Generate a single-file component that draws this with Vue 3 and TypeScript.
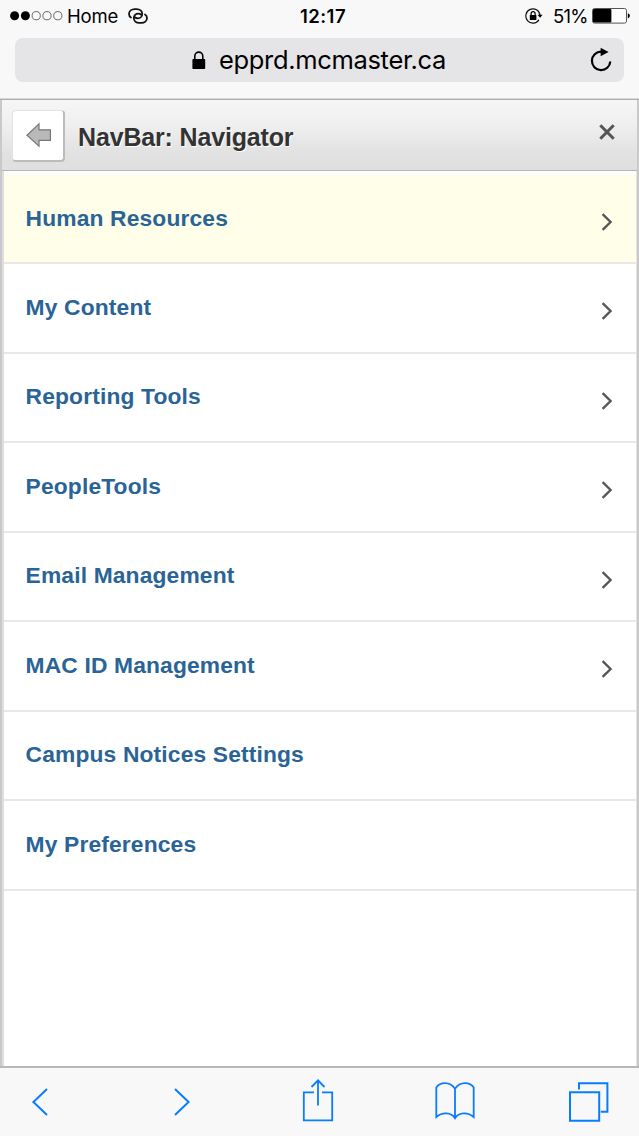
<script setup lang="ts">
interface NavItem {
  label: string
  folder: boolean
}

const signalDots: boolean[] = [true, true, false, false, false]

const items: NavItem[] = [
  { label: 'Human Resources', folder: true },
  { label: 'My Content', folder: true },
  { label: 'Reporting Tools', folder: true },
  { label: 'PeopleTools', folder: true },
  { label: 'Email Management', folder: true },
  { label: 'MAC ID Management', folder: true },
  { label: 'Campus Notices Settings', folder: false },
  { label: 'My Preferences', folder: false },
]
</script>

<template>
  <div class="phone">
    <div class="chrome">
      <div class="status">
        <div class="status-left">
          <svg class="dots" width="54" height="12" viewBox="0 0 54 12">
            <circle
              v-for="(on, i) in signalDots"
              :key="i"
              :cx="4.6 + i * 10.8"
              cy="5.7"
              :r="on ? 4.5 : 4.1"
              :fill="on ? '#000' : 'none'"
              :stroke="on ? 'none' : '#444'"
              stroke-width=".8"
            />
          </svg>
          <span class="carrier">Home</span>
          <svg class="link" width="20" height="16" viewBox="0 0 20 16" fill="none" stroke="#111" stroke-width="1.8" stroke-linecap="round">
            <path d="M3 9.5C1.6 8.7 1 7.5 1 6C1 3.2 3.4 1.1 6.8 1.1H8.6C12 1.1 14.2 3.2 14.2 5.9C14.2 8.6 12.2 10.3 9.8 10.3C8.6 10.3 7.6 10 6.8 9.3" />
            <path d="M17 6.5C18.4 7.3 19 8.5 19 10C19 12.8 16.6 14.9 13.2 14.9H11.4C8 14.9 5.8 12.8 5.8 10.1C5.8 7.4 7.8 5.7 10.2 5.7C11.4 5.7 12.4 6 13.2 6.7" />
          </svg>
        </div>
        <div class="clock">12:17</div>
        <div class="status-right">
          <svg class="rotation" width="18" height="16" viewBox="0 0 18 16">
            <path d="M13.9 11.8A7.1 7.1 0 1 1 15 7.2" fill="none" stroke="#111" stroke-width="1.2" />
            <path d="M12.5 6.8H17.6L15.1 9.7Z" />
            <rect x="4.8" y="6.9" width="6.6" height="5" rx=".5" />
            <path d="M6.1 7.4V5.7A2 2 0 0 1 10.1 5.7V7.4" fill="none" stroke="#000" stroke-width="1.2" />
          </svg>
          <span class="percent">51%</span>
          <svg class="battery" width="38" height="16" viewBox="0 0 38 16">
            <rect x=".5" y=".5" width="34" height="14.6" rx="2" fill="#fff" stroke="#555" />
            <rect x="1" y="1" width="18.4" height="13.6" rx="1" />
            <path d="M35.8 5.2Q37.9 6 37.9 7.8T35.8 10.4Z" />
          </svg>
        </div>
      </div>
      <div class="address">
        <svg class="lock" width="14" height="19" viewBox="0 0 14 19">
          <rect x=".4" y="8" width="12.8" height="10" rx=".8" />
          <path d="M2.8 8.6V5.2A4 4.1 0 0 1 10.8 5.2V8.6" fill="none" stroke="#000" stroke-width="1.6" />
        </svg>
        <span class="host">epprd.mcmaster.ca</span>
        <svg class="reload" width="22" height="24" viewBox="0 0 22 24">
          <path d="M11.2 3.7A9.2 9.2 0 1 0 20.3 13.5" fill="none" stroke="#000" stroke-width="2.2" />
          <path d="M10.6 -.2L18.6 4L10.6 8.2Z" />
        </svg>
      </div>
    </div>

    <main class="panel">
      <header class="header">
        <button class="back" aria-label="Back">
          <svg width="26" height="26" viewBox="0 0 26 26">
            <path d="M1 13.2L13 1.9V7.8H24.4V18.3H13V24.2Z" fill="#b9b9b9" stroke="#777" stroke-width="1.2" />
          </svg>
        </button>
        <h1>NavBar: Navigator</h1>
        <svg class="close" width="16" height="16" viewBox="0 0 16 16" fill="none" stroke="#555" stroke-width="3">
          <path d="M1.3 1.3L14.7 14.7M14.7 1.3L1.3 14.7" />
        </svg>
      </header>
      <ul class="list">
        <li v-for="(item, i) in items" :key="item.label" :class="{ active: i === 0 }">
          <span>{{ item.label }}</span>
          <svg v-if="item.folder" class="chevron" width="12" height="18" viewBox="0 0 12 18" fill="none" stroke="#555" stroke-width="2.3">
            <path d="M1.6 1.1L9.6 9L1.6 16.9" />
          </svg>
        </li>
      </ul>
    </main>

    <nav class="toolbar">
      <svg class="prev" width="18" height="30" viewBox="0 0 18 30"><path d="M16 2L2.4 15L16 28" /></svg>
      <svg class="next" width="18" height="30" viewBox="0 0 18 30"><path d="M2 2L15.6 15L2 28" /></svg>
      <svg class="share" width="32" height="43" viewBox="0 0 32 43">
        <path d="M12 13.3H1.8V41.4H30.2V13.3H20M16 1.4V26.4M9.5 8L16 1.4L22.5 8" />
      </svg>
      <svg class="book" width="40" height="38" viewBox="0 0 40 38">
        <path d="M20 36.2V6.8C17.2 2.4 13.2 1.2 9.8 1.2C6.3 1.2 3.2 2.7 1.3 5.4V35C7 30 16.2 30 20 36.2C23.8 30 33 30 38.7 35V5.4C36.8 2.7 33.7 1.2 30.2 1.2C26.8 1.2 22.8 2.4 20 6.8" />
      </svg>
      <svg class="tabs" width="40" height="40" viewBox="0 0 40 40">
        <path d="M1 10.2H30.2V38.8H1ZM10 7.6V1.2H38.4V29.7H31.8" />
      </svg>
    </nav>
  </div>
</template>

<style>
body {
  margin: 0;
  background: #fff;
}
</style>

<style scoped>
.phone {
  width: 639px;
  height: 1136px;
  display: flex;
  flex-direction: column;
  overflow: hidden;
  background: #fff;
  font-family: "Liberation Sans", Arial, sans-serif;
}
svg {
  display: block;
  flex: none;
}
.chrome {
  box-sizing: border-box;
  height: 100px;
  flex: none;
  background: #f8f8f8;
  border-bottom: 1px solid #b0b0b0;
  box-shadow: inset 0 -1px #d6d6d6;
  font-family: Inter, Roboto, sans-serif;
  color: #000;
}
.status {
  height: 38px;
  display: grid;
  grid-template-columns: 1fr 60px 1fr;
  padding-left: 7px;
  line-height: 33px;
  font-size: 18.5px;
}
.status-left,
.status-right {
  display: flex;
  align-items: flex-start;
}
.dots {
  margin: 10px 3px 0 3px;
}
.carrier {
  width: 51px;
  letter-spacing: -0.2px;
}
.link {
  margin: 8px 0 0 10px;
}
.clock {
  text-align: center;
  font-weight: 600;
  font-size: 18.5px;
  letter-spacing: 0.5px;
}
.status-right {
  justify-content: flex-end;
  padding-right: 9px;
}
.rotation {
  margin-top: 8px;
}
.percent {
  width: 35px;
  margin: 0 4px 0 10px;
  letter-spacing: -0.7px;
  white-space: nowrap;
}
.battery {
  margin-top: 8px;
}
.address {
  box-sizing: border-box;
  width: 609px;
  height: 44px;
  margin-left: 15px;
  padding: 0 12px 0 177px;
  display: flex;
  align-items: center;
  border-radius: 8px;
  background: #e5e5e7;
}
.host {
  margin-left: 13px;
  font-size: 25.5px;
  line-height: 44px;
  letter-spacing: -0.33px;
}
.reload {
  margin-left: auto;
  overflow: visible;
}
.panel {
  flex: 1;
  display: flex;
  flex-direction: column;
  min-height: 0;
  box-sizing: border-box;
  border-left: 2px solid #c9c9c9;
  border-right: 2px solid #c9c9c9;
}
.header {
  box-sizing: border-box;
  height: 71px;
  flex: none;
  display: flex;
  align-items: flex-start;
  padding: 10px 22px 0 10px;
  border-bottom: 1px solid #b5b5b5;
  background: linear-gradient(#f6f6f6, #efefef 35%, #e2e2e2 75%, #dfdfdf);
}
.back {
  box-sizing: border-box;
  width: 53px;
  height: 52px;
  padding: 0 0 2px 1px;
  display: flex;
  align-items: center;
  justify-content: center;
  border: 1px solid #e2e2e2;
  border-right: 2px solid #bcbcbc;
  border-bottom: 2px solid #bcbcbc;
  border-radius: 4px;
  background: #fff;
}
h1 {
  margin: 0 0 0 13px;
  font-size: 25px;
  line-height: 54px;
  letter-spacing: -0.16px;
  color: #333;
  text-shadow: 1px 1px 0 #fff;
}
.close {
  margin: 14px 0 0 auto;
}
.list {
  margin: 0;
  padding: 4px 0 0;
  list-style: none;
  border-left: 2px solid #dedede;
  border-right: 1px solid #e4e4e4;
  flex: 1;
}
.list li {
  box-sizing: border-box;
  height: 89.45px;
  display: flex;
  justify-content: space-between;
  align-items: flex-start;
  padding: 26.5px 23px 0 21.6px;
  border-bottom: 2px solid #e8e8e8;
  font-size: 22.8px;
  font-weight: bold;
  line-height: 32px;
  letter-spacing: 0.15px;
  color: #2a6496;
}
.list li.active {
  background: #ffffe9;
}
.chevron {
  margin-top: 11.5px;
}
.toolbar {
  box-sizing: border-box;
  height: 70px;
  flex: none;
  display: flex;
  align-items: flex-start;
  padding-left: 31px;
  border-top: 2px solid #b8b8b8;
  background: #f8f8f8;
}
.toolbar svg {
  fill: none;
  stroke: #087dff;
  stroke-width: 2;
}
.prev {
  margin-top: 19px;
}
.next {
  margin: 19px 0 0 124px;
}
.share {
  margin: 11px 0 0 111px;
}
.book {
  margin: 14px 0 0 101px;
}
.toolbar .book,
.toolbar .share {
  stroke-width: 1.8;
}
.tabs {
  margin: 14px 0 0 94px;
}
</style>
